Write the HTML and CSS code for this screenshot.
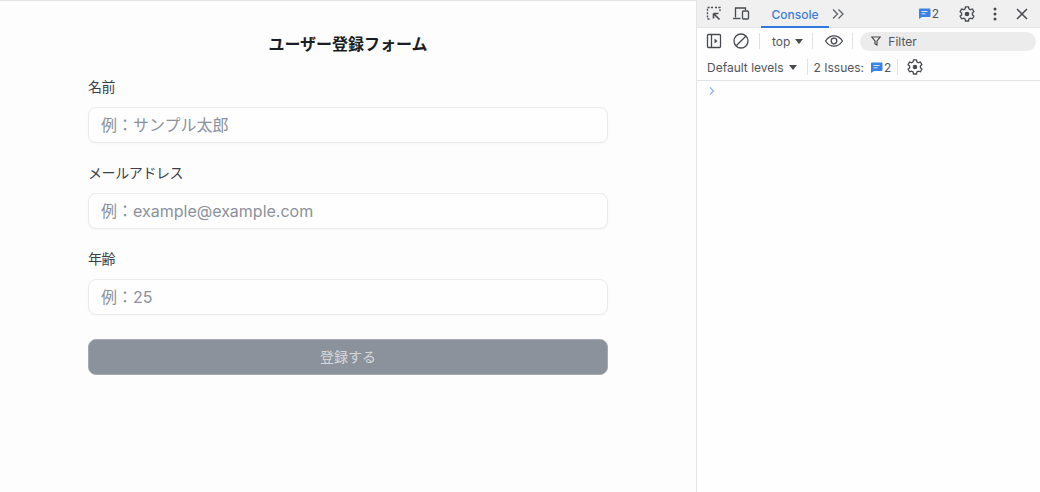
FILE: index.html
```html
<!DOCTYPE html>
<html lang="ja">
<head>
<meta charset="utf-8">
<title>ユーザー登録フォーム</title>
<link rel="stylesheet" href="styles.css">
</head>
<body>
<div class="app">
  <main class="page">
    <form class="form">
      <h1 class="title">ユーザー登録フォーム</h1>
      <div class="field">
        <label class="label">名前</label>
        <input class="input" type="text" placeholder="例：サンプル太郎">
      </div>
      <div class="field">
        <label class="label">メールアドレス</label>
        <input class="input" type="text" placeholder="例：example@example.com">
      </div>
      <div class="field">
        <label class="label">年齢</label>
        <input class="input" type="text" placeholder="例：25">
      </div>
      <button class="submit" type="button">登録する</button>
    </form>
  </main>
  <aside class="devtools">
    <div class="tabs">
      <svg class="icon inspect" width="18" height="18" viewBox="0 0 18 18" fill="none" stroke="#474a4f" stroke-width="1.3">
        <path d="M8 2.5H2.5V14H6" stroke-dasharray="2 1.4"/><path d="M10 2.5h5V7" stroke-dasharray="2 1.4"/>
        <path d="M8.5 8.5l6 6M8.5 8.5v5M8.5 8.5h5" stroke-width="1.6"/>
      </svg>
      <svg class="icon device" width="18" height="18" viewBox="0 0 18 18" fill="none" stroke="#474a4f" stroke-width="1.3">
        <path d="M3.5 12.5V3h10v2"/><path d="M1 13.5h7.5"/><rect x="10.5" y="6" width="6" height="8" rx="1"/>
      </svg>
      <div class="tab">Console</div>
      <svg class="icon more" width="14" height="14" viewBox="0 0 14 14" fill="none" stroke="#5f6368" stroke-width="1.3">
        <path d="M2 2.5L6.5 7 2 11.5M7.5 2.5L12 7l-4.5 4.5"/>
      </svg>
      <div class="spacer"></div>
      <span class="badge">
        <svg width="13" height="13" viewBox="0 0 13 13"><path d="M1 2.5a1 1 0 0 1 1-1h9.500a1 1 0 0 1 1 1v6.500a1 1 0 0 1-1 1H4L1 12z" fill="#3b82e6"/><path d="M3.500 4.500h6M3.500 6.800h4" stroke="#d2e3fc" stroke-width="1"/></svg>2
      </span>
      <svg class="icon gear-top" width="18" height="18" viewBox="0 0 18 18" fill="none" stroke="#474a4f"><use href="#gear"/></svg>
      <svg class="icon dots" width="14" height="16" viewBox="0 0 14 16" fill="#474a4f"><circle cx="7" cy="3" r="1.500"/><circle cx="7" cy="8" r="1.500"/><circle cx="7" cy="13" r="1.500"/></svg>
      <svg class="icon close" width="14" height="14" viewBox="0 0 14 14" stroke="#474a4f" stroke-width="1.500"><path d="M2 2l10 10M12 2L2 12"/></svg>
    </div>
    <div class="toolbar">
      <svg class="icon sidebar" width="16" height="16" viewBox="0 0 16 16" fill="none" stroke="#474a4f" stroke-width="1.300"><rect x="1.500" y="1.500" width="13" height="13" rx="1"/><path d="M5.500 1.500v13"/><path d="M8.500 5.500l3 2.500-3 2.500z" fill="#474a4f" stroke="none"/></svg>
      <svg class="icon block" width="16" height="16" viewBox="0 0 16 16" fill="none" stroke="#474a4f" stroke-width="1.300"><circle cx="8" cy="8" r="7"/><path d="M3.200 12.800l9.600-9.600"/></svg>
      <div class="sep first"></div>
      <div class="select">top <span class="caret"></span></div>
      <div class="sep"></div>
      <svg class="icon eye" width="20" height="14" viewBox="0 0 20 14" fill="none" stroke="#474a4f" stroke-width="1.300"><path d="M1.500 7C4 3.300 6.800 1.800 10 1.800S16 3.300 18.500 7C16 10.700 13.200 12.200 10 12.200S4 10.700 1.500 7z"/><circle cx="10" cy="7" r="2.800"/></svg>
      <div class="sep"></div>
      <div class="filter">
        <svg width="10" height="10" viewBox="0 0 10 10" fill="none" stroke="#474a4f" stroke-width="1.200"><path d="M.8 1h8.400L6 5v4L4 8V5z"/></svg>
        <span>Filter</span>
      </div>
    </div>
    <div class="levels">
      <div class="select">Default levels <span class="caret"></span></div>
      <div class="sep"></div>
      <span class="issues">2 Issues:</span>
      <span class="badge">
        <svg width="13" height="13" viewBox="0 0 13 13"><path d="M1 2.500a1 1 0 0 1 1-1h9.500a1 1 0 0 1 1 1v6.500a1 1 0 0 1-1 1H4L1 12z" fill="#3b82e6"/><path d="M3.500 4.500h6M3.500 6.800h4" stroke="#d2e3fc" stroke-width="1"/></svg>2
      </span>
      <div class="sep"></div>
      <svg class="icon gear-low" width="18" height="18" viewBox="0 0 18 18" fill="none" stroke="#474a4f">
        <defs>
          <g id="gear">
            <path stroke-width="1.300" d="M7.500 1.800h3l.4 2 1.500.9 2-.7 1.500 2.600-1.500 1.400v1.800l1.500 1.400-1.500 2.600-2-.7-1.500.9-.4 2h-3l-.4-2-1.500-.9-2 .7-1.500-2.600L3.600 9.900V8.100L2.100 6.600l1.500-2.600 2 .7 1.500-.9z"/>
            <circle cx="9" cy="9" r="2.300" fill="#474a4f" stroke="none"/>
          </g>
        </defs>
        <use href="#gear"/>
      </svg>
    </div>
    <div class="console">
      <svg width="8" height="10" viewBox="0 0 8 10" fill="none" stroke="#8ab4f8" stroke-width="1.300"><path d="M2 1.500L5.500 5 2 8.500"/></svg>
    </div>
  </aside>
</div>
</body>
</html>
```
FILE: styles.css
```css
* { box-sizing: border-box; }
html, body { margin: 0; height: 100%; }
body {
  background: #fdfdfd;
  color: #1f2937;
  font-family: Inter, "Noto Sans CJK JP", sans-serif;
  overflow: hidden;
}
.app {
  display: flex;
  width: 1040px;
  height: 492px;
}
.page {
  width: 696px;
  flex: none;
  border-top: 1px solid #e3e4e6;
  padding: 31px 88px 0;
}
.form { width: 520px; }
.title {
  margin: 0 0 21px;
  font-size: 16px;
  line-height: 24px;
  font-weight: 700;
  text-align: center;
  color: #1a1d23;
}
.field { margin-bottom: 20px; }
.label {
  display: block;
  font-size: 14px;
  line-height: 20px;
  letter-spacing: -.4px;
  margin-bottom: 10px;
  color: #3a404a;
}
.input {
  display: block;
  width: 100%;
  height: 36px;
  padding: 0 12px;
  border: 1px solid #e8eaed;
  border-radius: 8px;
  background: #fefefe;
  font: 16px Inter, "Noto Sans CJK JP", sans-serif;
  box-shadow: 0 1px 2px rgba(0, 0, 0, .03);
  outline: none;
}
.input::placeholder { color: #8b919c; opacity: 1; }
.submit {
  display: block;
  width: 100%;
  height: 36px;
  margin-top: 24px;
  padding: 0 0 2px;
  border: 1px solid #a3a8b1;
  border-radius: 8px;
  background: #8c929c;
  color: #d6d8dc;
  font: 14px Inter, "Noto Sans CJK JP", sans-serif;
}
.devtools {
  flex: 1;
  display: flex;
  flex-direction: column;
  border-left: 1px solid #e3e4e6;
  background: #fefefe;
  font-family: Inter, "Liberation Sans", sans-serif;
  font-size: 12px;
  color: #52565c;
}
.icon { flex: none; display: block; }
.tabs {
  height: 28px;
  flex: none;
  display: flex;
  align-items: center;
  background: #f0f0f1;
  border-bottom: 1px solid #e3e4e6;
  padding-left: 8px;
}
.device { margin-left: 9px; }
.tab {
  width: 68px;
  height: 28px;
  margin-left: 11px;
  line-height: 29px;
  text-align: center;
  color: #3b7dd8;
  font-weight: 500;
  border-bottom: 2px solid #2f7ae0;
}
.more { margin-left: 2px; }
.spacer { flex: 1; }
.badge {
  display: inline-flex;
  align-items: center;
  gap: 1px;
  font-size: 12px;
}
.tabs .badge { margin-right: 19px; }
.dots { margin-left: 12px; }
.close { margin: 0 11px 0 13px; }
.toolbar {
  height: 26px;
  flex: none;
  display: flex;
  align-items: center;
  padding-left: 9px;
}
.block { margin-left: 11px; }
.sep {
  width: 1px;
  height: 16px;
  background: #e0e1e3;
  flex: none;
}
.toolbar .first { margin-left: 10px; }
.select {
  display: flex;
  align-items: center;
  gap: 5px;
}
.toolbar .select { margin: 0 9px 0 12px; }
.caret {
  width: 0;
  height: 0;
  border: 4px solid transparent;
  border-top: 5px solid #474a4f;
  border-bottom: 0;
}
.eye { margin: 0 8px 0 11px; }
.filter {
  width: 176px;
  height: 19px;
  margin-left: 7px;
  display: flex;
  align-items: center;
  gap: 7px;
  padding-left: 11px;
  border-radius: 10px;
  background: #ececec;
}
.levels {
  height: 27px;
  flex: none;
  display: flex;
  align-items: center;
  padding-left: 10px;
  border-bottom: 1px solid #e3e4e6;
}
.levels .select { margin-right: 10px; }
.issues { margin: 0 6px; }
.levels .badge + .sep { margin-left: 6px; }
.gear-low { margin-left: 8px; }
.console {
  flex: 1;
  padding: 5px 0 0 11px;
}
.console svg { display: block; }
```
